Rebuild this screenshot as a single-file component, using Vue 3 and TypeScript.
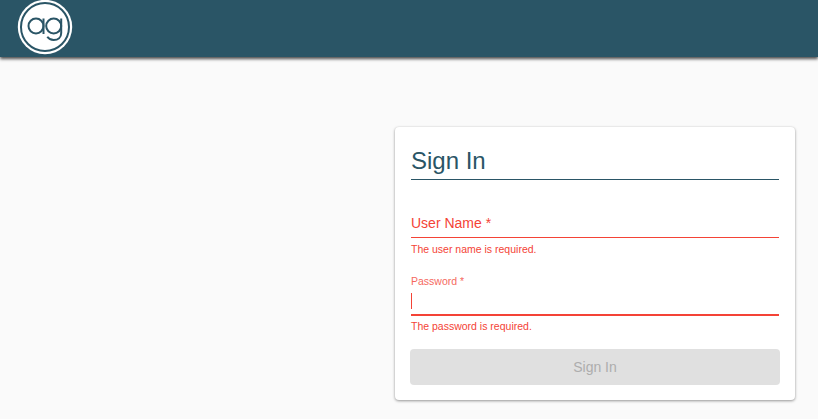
<script setup lang="ts">
import { ref } from "vue"

const userName = ref("")
</script>

<template>
  <div class="page">
    <header class="topbar">
      <svg class="logo" width="56" height="56" viewBox="0 0 56 56" role="img" aria-label="ag logo">
        <circle cx="28" cy="28" r="27.2" fill="#fff" />
        <circle cx="28" cy="28" r="24" fill="none" stroke="#2a5566" stroke-width="2" />
        <g fill="none" stroke="#2a5566" stroke-width="2">
          <circle cx="19" cy="27" r="7.5" />
          <line x1="26.5" y1="19.5" x2="26.5" y2="35" />
          <circle cx="36.7" cy="27" r="7.5" />
          <path d="M44.2 19.5v14.5c0 4.6-3.2 7-7.5 7-2.8 0-5-1.1-6.4-3.2" />
        </g>
      </svg>
    </header>

    <main class="content">
      <form class="card" @submit.prevent>
        <h1 class="title">Sign In</h1>

        <div class="field field-user">
          <input v-model="userName" class="input" type="text" aria-label="User Name" />
          <label class="label label-rest">User Name *</label>
          <div class="line"></div>
          <div class="error">The user name is required.</div>
        </div>

        <div class="field field-pass">
          <label class="label label-float">Password *</label>
          <div class="caret-row"><span class="caret"></span></div>
          <div class="line line-focus"></div>
          <div class="error error-pass">The password is required.</div>
        </div>

        <button class="submit" type="submit" disabled>Sign In</button>
      </form>
    </main>
  </div>
</template>

<style>
html,
body {
  margin: 0;
  background: #fafafa;
}
</style>

<style scoped>
.page {
  height: 419px;
  overflow: hidden;
  display: flex;
  flex-direction: column;
  background: #fafafa;
  font-family: "Liberation Sans", Arial, sans-serif;
}

.topbar {
  height: 57px;
  flex: none;
  padding-left: 17px;
  background: #2a5566;
  box-shadow: 0 2px 3px rgba(0, 0, 0, 0.7);
}

.logo {
  display: block;
  margin-top: -1px;
}

.content {
  display: flex;
  justify-content: flex-end;
  padding: 70px 23px 0 0;
}

.card {
  width: 400px;
  height: 273px;
  box-sizing: border-box;
  padding: 16px;
  background: #fff;
  border-radius: 4px;
  box-shadow: 0 1px 3px rgba(0, 0, 0, 0.4), 0 0 2px rgba(0, 0, 0, 0.06);
}

.title {
  margin: 0;
  height: 36px;
  border-bottom: 1px solid #2a5566;
  font-size: 24px;
  font-weight: 400;
  line-height: 36px;
  color: #2a5566;
}

.field {
  position: relative;
}

.field-user {
  margin-top: 29px;
  height: 50px;
}

.field-pass {
  margin-top: 15px;
  height: 75px;
}

.input {
  display: block;
  width: 100%;
  height: 28px;
  box-sizing: border-box;
  padding: 0;
  border: 0;
  outline: 0;
  background: transparent;
}

.label {
  display: block;
  color: #f44336;
}

.label-rest {
  position: absolute;
  top: 6px;
  left: 0;
  font-size: 14px;
  line-height: 16px;
}

.label-float {
  height: 14px;
  font-size: 10.5px;
  line-height: 14px;
  opacity: 0.8;
}

.caret-row {
  height: 26px;
  padding-top: 5px;
  box-sizing: border-box;
}

.caret {
  display: block;
  width: 1px;
  height: 16px;
  background: #f44336;
}

.line {
  height: 1px;
  background: #f44336;
}

.line-focus {
  height: 2px;
}

.error {
  margin-top: 5px;
  font-size: 10.5px;
  line-height: 12px;
  color: #f44336;
}

.error-pass {
  margin-top: 4px;
}

.submit {
  display: block;
  width: 370px;
  height: 36px;
  margin: 0 -1px;
  border: 0;
  border-radius: 4px;
  background: #e0e0e0;
  color: #adadad;
  font-family: inherit;
  font-size: 14px;
}
</style>
